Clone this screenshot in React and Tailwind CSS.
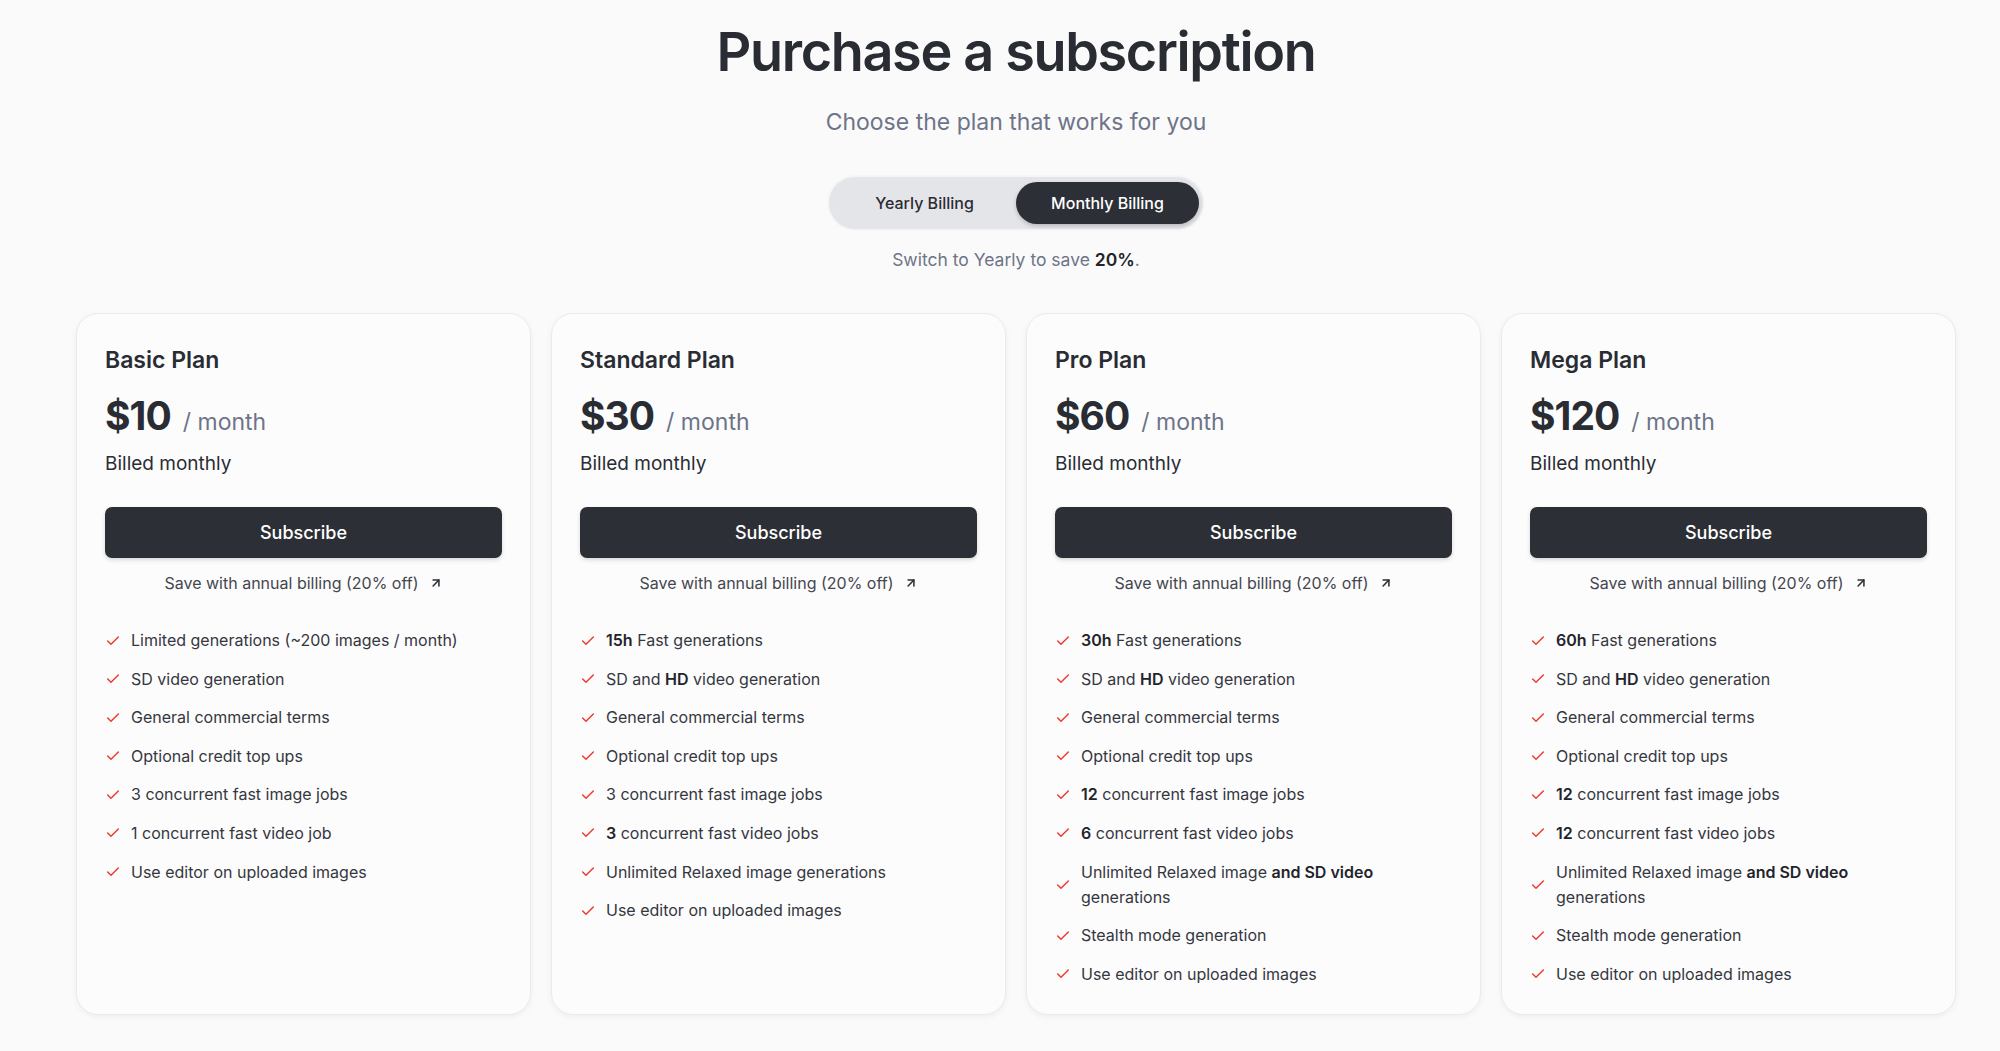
import { Check, ArrowUpRight } from "lucide-react";

const plans = [
  {
    name: "Basic Plan",
    price: "$10",
    features: [
      [["Limited generations (~200 images / month)"]],
      [["SD video generation"]],
      [["General commercial terms"]],
      [["Optional credit top ups"]],
      [["3 concurrent fast image jobs"]],
      [["1 concurrent fast video job"]],
      [["Use editor on uploaded images"]],
    ],
  },
  {
    name: "Standard Plan",
    price: "$30",
    features: [
      [["15h", true], [" Fast generations"]],
      [["SD and "], ["HD", true], [" video generation"]],
      [["General commercial terms"]],
      [["Optional credit top ups"]],
      [["3 concurrent fast image jobs"]],
      [["3", true], [" concurrent fast video jobs"]],
      [["Unlimited Relaxed image generations"]],
      [["Use editor on uploaded images"]],
    ],
  },
  {
    name: "Pro Plan",
    price: "$60",
    features: [
      [["30h", true], [" Fast generations"]],
      [["SD and "], ["HD", true], [" video generation"]],
      [["General commercial terms"]],
      [["Optional credit top ups"]],
      [["12", true], [" concurrent fast image jobs"]],
      [["6", true], [" concurrent fast video jobs"]],
      [["Unlimited Relaxed image "], ["and SD video", true], ["br"], ["generations"]],
      [["Stealth mode generation"]],
      [["Use editor on uploaded images"]],
    ],
  },
  {
    name: "Mega Plan",
    price: "$120",
    features: [
      [["60h", true], [" Fast generations"]],
      [["SD and "], ["HD", true], [" video generation"]],
      [["General commercial terms"]],
      [["Optional credit top ups"]],
      [["12", true], [" concurrent fast image jobs"]],
      [["12", true], [" concurrent fast video jobs"]],
      [["Unlimited Relaxed image "], ["and SD video", true], ["br"], ["generations"]],
      [["Stealth mode generation"]],
      [["Use editor on uploaded images"]],
    ],
  },
];

const Feature = ({ parts }) => (
  <li className="flex items-center gap-[10px]">
    <Check size={16} strokeWidth={2.2} className="shrink-0 text-[#ef3b2d]" />
    <span className="text-[16px] leading-[25px] text-[#35373e]">
      {parts.map(([text, bold], i) =>
        text === "br" ? (
          <br key={i} />
        ) : bold ? (
          <span key={i} className="font-semibold text-[#22242a]">
            {text}
          </span>
        ) : (
          <span key={i}>{text}</span>
        )
      )}
    </span>
  </li>
);

const PlanCard = ({ plan }) => (
  <div className="h-[702px] rounded-[22px] border border-[#ebebef] bg-[#fcfcfd] px-7 pt-[30px] shadow-[0_2px_6px_rgba(0,0,0,0.05)]">
    <h2 className="text-[23px] leading-[32px] font-semibold text-[#2a2c33]">
      {plan.name}
    </h2>
    <div className="mt-4 flex items-baseline gap-3 leading-[48px]">
      <span className="text-[39px] font-bold tracking-tight text-[#2a2c33]">
        {plan.price}
      </span>
      <span className="text-[23px] text-[#6e7488]">/ month</span>
    </div>
    <p className="mt-[4px] text-[19px] leading-[28px] text-[#2a2c33]">
      Billed monthly
    </p>
    <button className="mt-[29px] h-[51px] w-full rounded-[7px] bg-[#2d2f36] text-[18px] font-medium text-white shadow-[0_2px_4px_rgba(0,0,0,0.15)]">
      Subscribe
    </button>
    <div className="mt-[13px] flex items-center justify-center gap-[10px] text-[16px] leading-[24px] text-[#45474e]">
      <span>Save with annual billing (20% off)</span>
      <ArrowUpRight size={14} strokeWidth={2.6} className="text-[#2a2c33]" />
    </div>
    <ul className="mt-[33px] flex flex-col gap-[13.6px]">
      {plan.features.map((f, i) => (
        <Feature key={i} parts={f} />
      ))}
    </ul>
  </div>
);

export default function App() {
  return (
    <div className="min-h-screen bg-[#fafafa] pl-[76px] pr-[44px] pt-[20px] pb-10 font-['Inter',sans-serif]">
      <h1 className="text-center text-[54px] leading-[64px] font-semibold tracking-[-0.025em] text-[#2a2c33]">
        Purchase a subscription
      </h1>
      <p className="mt-[22px] text-center text-[23px] leading-[32px] text-[#6e7488]">
        Choose the plan that works for you
      </p>
      <div className="mt-[39px] flex justify-center">
        <div className="flex h-[52px] items-center rounded-full bg-[#e4e5e9] px-1 shadow-[0_0_0_2px_rgba(0,0,0,0.02)]">
          <button className="h-[42px] w-[183px] rounded-full text-[16px] font-medium text-[#2a2c33]">
            Yearly Billing
          </button>
          <button className="h-[42px] w-[183px] rounded-full bg-[#2d2f36] text-[16px] font-medium text-white shadow-[0_2px_4px_rgba(0,0,0,0.2)]">
            Monthly Billing
          </button>
        </div>
      </div>
      <p className="mt-[17px] text-center text-[17.5px] leading-[28px] text-[#6e7488]">
        Switch to Yearly to save{" "}
        <span className="font-semibold text-[#22242a]">20%</span>.
      </p>
      <div className="mt-[39px] grid grid-cols-4 gap-5">
        {plans.map((p) => (
          <PlanCard key={p.name} plan={p} />
        ))}
      </div>
    </div>
  );
}
